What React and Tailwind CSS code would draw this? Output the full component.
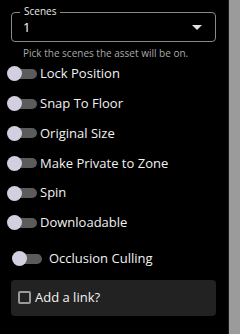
const toggles = ['Lock Position', 'Snap To Floor', 'Original Size', 'Make Private to Zone', 'Spin', 'Downloadable'];

function Toggle() {
  return (
    <span className="relative inline-flex items-center w-[30px] h-[16px] shrink-0">
      <span className="absolute left-[4px] right-0 h-[10px] rounded-full bg-[#5b5b5b]" />
      <span className="absolute left-0 w-[15px] h-[15px] rounded-full bg-[#d3cfe0]" />
    </span>
  );
}

export default function App() {
  return (
    <div className="flex w-[240px] h-[334px] bg-black text-white overflow-hidden" style={{ fontFamily: '"Open Sans", "Noto Sans", sans-serif' }}>
      <div className="flex-1 flex flex-col pl-[11px] pr-[12px] pt-[6px]">
        <div className="relative mt-[6px] h-[30px] border border-[#8a8a8a] rounded-[4px] flex items-center pl-[11px] pr-[13px]">
          <span className="absolute -top-[8px] left-[8px] px-[4px] bg-black text-[10px] leading-[12px] text-[#e8e8e8]">Scenes</span>
          <span className="flex-1 text-[13px] leading-none">1</span>
          <svg width="10" height="5" viewBox="0 0 10 5"><path d="M0 0h10L5 5z" fill="#e0e0e0" /></svg>
        </div>
        <p className="mt-[4px] pl-[12px] text-[10px] leading-[14px] text-[#a8a8a8]">Pick the scenes the asset will be on.</p>
        <div className="flex flex-col -mt-[1px] -ml-[4px]">
          {toggles.map((t) => (
            <div key={t} className="flex items-center gap-[3px] h-[29.8px]">
              <Toggle />
              <span className="text-[13px] font-medium text-[#f2f2f2]">{t}</span>
            </div>
          ))}
        </div>
        <div className="flex items-center gap-[7px] h-[30px] mt-[6px] pl-[1px]">
          <Toggle />
          <span className="text-[13px] font-medium text-[#f2f2f2]">Occlusion Culling</span>
        </div>
        <div className="mt-[6px] h-[36px] bg-[#222222] rounded-[4px] flex items-center pl-[7px] gap-[4px]">
          <span className="w-[13px] h-[13px] border-2 border-[#9a9a9a] rounded-[2px]" />
          <span className="text-[13px] font-medium text-[#f2f2f2]">Add a link?</span>
        </div>
      </div>
      <div className="w-[1px] bg-[#1c1c1c]" />
      <div className="w-[11px] bg-[#9b9b9b]" />
    </div>
  );
}
